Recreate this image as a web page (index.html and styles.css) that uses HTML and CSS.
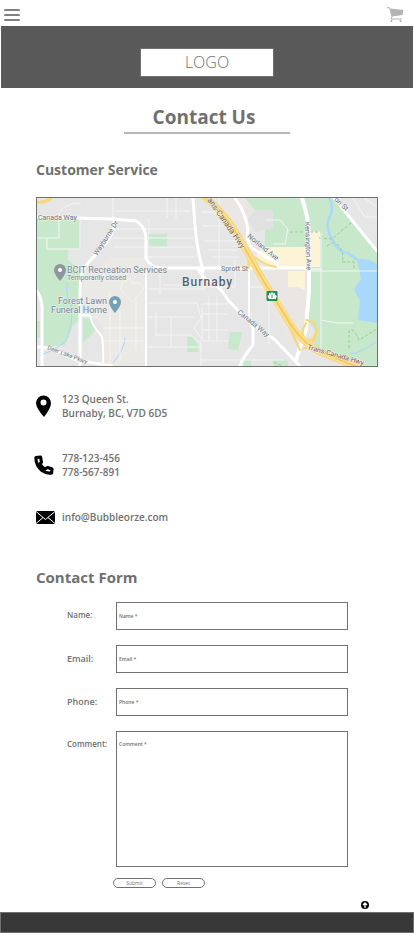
FILE: index.html
```html
<!DOCTYPE html>
<html lang="en">
<head>
<meta charset="utf-8">
<meta name="viewport" content="width=device-width, initial-scale=1">
<title>Contact Us</title>
<link rel="stylesheet" href="styles.css">
</head>
<body>
<div class="page">
  <nav class="topbar">
    <button class="icon-button" type="button" aria-label="Menu">
      <svg width="16" height="14" viewBox="0 0 16 14"><path d="M1 2h14M1 7h14M1 12h14" stroke="#808080" stroke-width="2" stroke-linecap="round"/></svg>
    </button>
    <a class="cart" href="#cart" aria-label="Cart">
      <svg width="17" height="16" viewBox="0 0 17 16"><path d="M3 1.500 16.500 3 15.500 8 5 9.500z" fill="#b3b3b3"/><path d="M0 .7h2.500L5 9.500 4 12h11" fill="none" stroke="#b3b3b3"/><circle cx="4.500" cy="14" r="1" fill="#aaa"/><circle cx="13.500" cy="14" r="1" fill="#aaa"/></svg>
    </a>
  </nav>
  <header class="banner"><a class="logo" href="#top">LOGO</a></header>
  <main>
    <h1>Contact Us</h1>
    <section>
      <h2>Customer Service</h2>
      <svg class="map" viewBox="37 198 340 168" role="img" aria-label="Map of Burnaby">
        <rect x="37" y="198" width="340" height="168" fill="#e6e6e6"/>
        <path d="M97 270 108 257H146V270L147 366H104L103 330 92 313 84 300 82 270z" fill="#ebe9e6"/>
        <path d="M245 198 255 216 250 240 258 258 285 268H308V320L296 348 270 310 235 240 218 198z" fill="#e9e6e3"/>
        <g fill="#c7e8cb">
          <path d="M37 218H80V249H68V260L81 270 79 320 73 326 65 345 43 347 42 300 37 290z"/>
          <path d="M83 317H91L95 331 83 343zM187 337H192L198 345V352H187zM149 234H167V247H149zM37 321H40V338H37zM230 332H242L238 350 228 349zM244 360H251V366H244zM273 359 288 361V366H273z"/>
          <path d="M245 198H377V366H357L325 353 313 347 317 333 307 320 309 266H320V231H309V247H265V229L273 228V211L255 210z"/>
        </g>
        <path d="M273 228V213Q273 210 269 210H255L247 220 256 232z" fill="#e1e1e1"/>
        <path d="M263 247H309V232H320V267H270L256 256zM288 271H305V290L297 287H288z" fill="#fdf3d6"/>
        <path d="M335 198 377 252V198z" fill="#e6e6e6"/>
        <path d="M357 259Q369 258 377 264V323Q366 321 358 320L360 301 354 289 361 279z" fill="#a8d8fb"/>
        <g fill="none" stroke="#a8d8fb" stroke-linecap="round">
          <path stroke-width="2.500" d="M329 198Q335 208 329 218 325 228 333 241 339 253 348 253L360 262"/>
          <path d="M67 283Q65 293 71 305 74 326 65 342 50 353 40 355M125 338Q125 349 113 363M377 341Q362 353 350 354"/>
        </g>
        <g fill="none" stroke="#93cd9b" stroke-dasharray="3 2">
          <path d="M290 232H322M319 238 332 239 351 223M327 246 334 242M337 244Q345 252 342 262H354V270M349 348V331Q353 326 359 340L377 329M274 362 282 366"/>
        </g>
        <g fill="none" stroke="#f4f4f4" stroke-width="1">
          <path d="M113 198V218M113 211H190M113 229H194M113 238H194M113 247H194M58 216Q62 203 81 203M149 218V234M80 218V249H47V239M37 238H59V218M145 257 194 257"/>
          <path d="M80 317H97M104 328H146M110 293V366M120 310V362M136 300V350M104 341H145M121 290 132 302 144 289Q140 280 134 284L129 279 122 283zM148 303H197L201 318 194 328 201 338M148 317H194M156 312V336M156 335H191L201 344V366M148 347H201M171 318V346M148 289H205M160 266V294M163 285H191"/>
          <path d="M167 198V218M176 198V218M201 212H226M202 226H233M204 241H238M208 250H238M212 257H239M219 198V266M235 260V287H201M202 309V340M209 296V341M217 296V342M202 304H228M202 314H228M202 330H228M200 341H228M200 360H284M250 287H263M269 287V344M306 271H377M321 231V349M265 220H280L288 229 285 244H273M321 320 337 323 353 323M353 198 365 217H377M364 198 377 207"/>
        </g>
        <g fill="none" stroke="#fff" stroke-linecap="round" stroke-linejoin="round">
          <path stroke-width="3" d="M37 217 112 219 136 221Q146 226 146 240V258Q150 268 162 268H310"/>
          <path stroke-width="3" d="M113 218Q116 229 107 242L88 263Q80 271 80 290V366"/>
          <path stroke-width="3" d="M37 291Q43 300 42 313V366M37 347 50 348 76 360 112 366"/>
          <path stroke-width="2" d="M80 315H90Q91 325 101 335 104 341 103 366M146 268V366"/>
          <path stroke-width="3" d="M193 198 195 226Q197 250 203 270L202 278Q218 282 228 300L250 323 274 339 300 366"/>
          <path stroke-width="3" d="M198 268Q202 280 220 287M250 320 253 329V345Q243 357 240 366"/>
          <path stroke-width="2" d="M249 269V316"/>
          <path stroke-width="3" d="M235 198Q246 213 248 230 245 239 252 248L266 257Q277 260 278 268"/>
          <path stroke-width="4" d="M302 198Q309 218 309 240V290L306 329 296 360"/>
          <path stroke-width="3" d="M334 198 377 251"/>
          <path stroke-width="1" d="M305 269H321"/>
        </g>
        <g fill="none" stroke="#f8d77c" stroke-linecap="round">
          <path stroke-width="3" d="M37 202Q45 203 51 198"/>
          <path stroke-width="2" d="M306 320Q316 320 317 332 314 346 303 349M306 323Q299 335 307 341 316 340 316 328M283 314 300 350M251 255Q266 266 276 267M249 268 247 250"/>
          <path stroke-width="7" d="M206 198Q228 216 242 243L263 280 283 312Q298 340 318 351L362 369"/>
        </g>
        <path d="M206 198Q228 216 242 243L263 280 283 312Q298 340 318 351L362 369" fill="none" stroke="#f1c14e"/>
        <path d="M204 199Q226 217 240 244L261 281 281 313Q296 341 316 352L360 370M208 198Q230 216 244 243L265 280 285 311Q300 339 320 350L364 368" fill="none" stroke="#fff0ae" stroke-width=".6"/>
        <rect x="266.500" y="291" width="11" height="10" rx="1" fill="#18945f"/>
        <path d="M272 292 273.500 293.500 275 293V295L277 296 275.500 299H269L267.500 296 269 295V293L270.500 293.500z" fill="#fff"/><path d="M272 294.500V298" stroke="#18945f"/>
        <path d="M60 281Q54 274 54 270A6 6 0 0 1 66 270Q66 274 60 281z" fill="#8f979e"/><circle cx="60" cy="270" r="2" fill="#fff"/>
        <path d="M115 313Q109 306 109 302A6 6 0 0 1 121 302Q121 306 115 313z" fill="#76a0b5"/><circle cx="115" cy="302" r="2" fill="#fff"/>
        <g class="road-name">
          <text x="38" y="220">Canada Way</text>
          <text transform="translate(97 256) rotate(-57)">Wayburne Dr</text>
          <text x="221" y="271">Sprott St</text>
          <text transform="translate(247 237) rotate(39)">Norland Ave</text>
          <text transform="translate(305 222) rotate(88)">Kensington Ave</text>
          <text transform="translate(237 313) rotate(39)">Canada Way</text>
          <text class="minor" transform="translate(47 349) rotate(21)">Deer Lake Pkwy</text>
          <text transform="translate(334 200) rotate(44)">on St</text>
        </g>
        <g class="highway-name">
          <text transform="translate(207 200) rotate(55)">ans-Canada Hwy</text>
          <text class="highway-end" transform="translate(307 349) rotate(16)">Trans-Canada Hwy</text>
        </g>
        <g class="place-name">
          <text x="67" y="273">BCIT Recreation Services</text>
          <text class="place-note" x="67" y="280">Temporarily closed</text>
          <g class="place-blue"><text x="107" y="304">Forest Lawn</text><text x="107" y="313">Funeral Home</text></g>
        </g>
        <text class="city" x="182" y="286">Burnaby</text>
      </svg>
      <address class="details">
        <div class="detail">
          <svg width="20" height="22" viewBox="0 0 20 22"><path fill-rule="evenodd" d="M8 22Q0 13 0 8A7.500 7.500 0 0 1 15 8Q15 13 8 22zM7.500 4.500a3 3 0 1 0 0 6 3 3 0 0 0 0-6z"/></svg>
          <p>123 Queen St.<br>Burnaby, BC, V7D 6D5</p>
        </div>
        <div class="detail">
          <svg class="phone" width="20" height="20" viewBox="0 0 20 20"><path d="M2 2.500 6.500 2 7.500 7 6 9Q8 12.500 11 14L13.500 12.500 18 14 17.500 18Q13 19 8 15.500 1.500 10 2 2.500z" fill="#fff" stroke="#000" stroke-width="3.200" stroke-linejoin="round"/></svg>
          <p>778-123-456<br>778-567-891</p>
        </div>
        <div class="detail">
          <svg width="20" height="14" viewBox="0 0 20 14"><rect y="1" width="19" height="13" rx="1"/><path d="M0 1.500 9.500 9.500 19 1.500M0 13.500 7 7.500M19 13.500 12 7.500" fill="none" stroke="#fff"/></svg>
          <p>info@Bubbleorze.com</p>
        </div>
      </address>
    </section>
    <section>
      <h2 class="form-title">Contact Form</h2>
      <form class="form">
        <label class="small" for="name">Name:</label><input id="name" type="text" placeholder="Name *">
        <label for="email">Email:</label><input id="email" type="email" placeholder="Email *">
        <label for="phone">Phone:</label><input id="phone" type="tel" placeholder="Phone *">
        <label class="small" for="comment">Comment:</label><textarea id="comment" placeholder="Comment *"></textarea>
        <div class="actions"><button type="submit">Submit</button><button type="reset">Reset</button></div>
      </form>
    </section>
  </main>
  <a class="to-top" href="#top" aria-label="Back to top"><svg width="8" height="8" viewBox="0 0 8 8"><circle cx="4" cy="4" r="4"/><path d="M4 7V2M2 4 4 2 6 4" fill="none" stroke="#fff" stroke-width="1.300"/></svg></a>
  <footer></footer>
</div>
</body>
</html>
```
FILE: styles.css
```css
* { box-sizing: border-box; }
body {
  margin: 0;
  background: #fff;
  color: #707070;
  font-family: "Open Sans", "Noto Sans", sans-serif;
}
svg { display: block; }
h1, h2, p { margin: 0; }
.topbar {
  display: flex;
  justify-content: space-between;
  align-items: center;
  height: 26px;
  padding: 4px 10px 0 4px;
}
.icon-button { padding: 0; border: 0; background: none; }
.banner {
  display: flex;
  justify-content: center;
  align-items: center;
  height: 62px;
  margin: 0 1px;
  padding-top: 10px;
  background: #595959;
}
.logo {
  width: 134px;
  border: 1px solid #707070;
  background: #fff;
  color: #707070;
  font-size: 16px;
  font-weight: 300;
  line-height: 27px;
  text-align: center;
  text-decoration: none;
}
main { padding: 0 36px; }
h1 {
  width: 166px;
  margin: 16px auto 0;
  padding: 0 6px 2px 0;
  border-bottom: 2px solid #b7b7b7;
  font-size: 19px;
  line-height: 26px;
  text-align: center;
}
h2 {
  margin-top: 26px;
  font-size: 14px;
  line-height: 20px;
}
.map {
  width: 100%;
  margin-top: 17px;
  border: 1px solid #707070;
  font-family: Roboto, sans-serif;
}
.road-name { font-size: 7px; fill: #6c747b; }
.minor { font-size: 6px; }
.highway-name { font-size: 8px; fill: #80572b; }
.highway-end { font-size: 7px; }
.place-name { font-size: 9px; fill: #77828b; }
.place-note { font-size: 7px; }
.place-blue { fill: #688797; text-anchor: end; }
.city { font-size: 12px; font-weight: 500; letter-spacing: 1px; fill: #59616a; }
.map text { stroke: #f3f3f3; stroke-width: 1px; paint-order: stroke; }
.details {
  display: grid;
  gap: 31px;
  margin-top: 25px;
  font-size: 10px;
  font-style: normal;
  font-weight: 600;
  line-height: 14px;
}
.detail {
  display: grid;
  grid-template-columns: 20px 1fr;
  column-gap: 6px;
  align-items: center;
}
.phone { margin-left: -2px; }
.form-title { margin-top: 43px; font-size: 15px; }
.form {
  display: grid;
  grid-template-columns: 49px 1fr;
  row-gap: 15px;
  margin: 15px 30px 0 31px;
}
label { font-size: 9px; font-weight: 600; line-height: 27px; }
.small { font-size: 8px; line-height: 25px; }
input, textarea {
  width: 100%;
  margin: 0;
  padding: 0 2px;
  border: 1px solid #707070;
  border-radius: 0;
  background: #fff;
  color: #707070;
  font: 600 5px "Open Sans", sans-serif;
}
input { height: 28px; }
textarea { display: block; height: 136px; padding-top: 9px; resize: none; }
::placeholder { color: #707070; opacity: 1; }
.actions {
  grid-column: 1 / -1;
  display: flex;
  gap: 6px;
  margin: -4px 0 0 46px;
}
.actions button {
  width: 43px;
  height: 10px;
  padding: 0;
  border: 1px solid #707070;
  border-radius: 5px;
  background: #fff;
  color: #707070;
  font: 400 5px/7px "Open Sans", sans-serif;
}
.to-top { display: block; width: 8px; margin: 13px 45px 3px auto; }
footer { height: 21px; border: 1px solid #707070; background: #383838; }
```
